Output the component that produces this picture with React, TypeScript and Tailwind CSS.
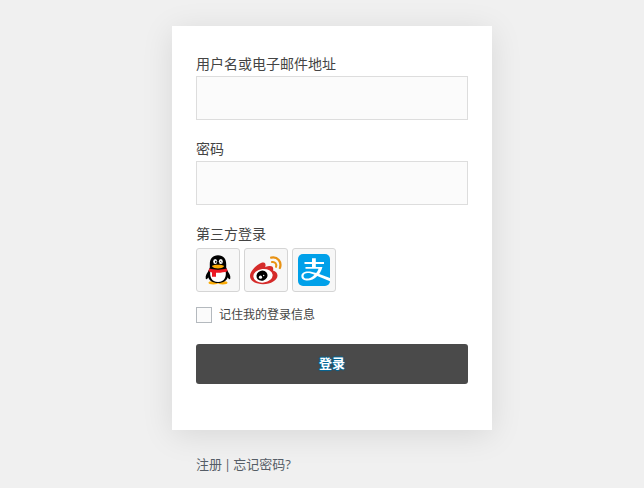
import type { ReactNode } from "react";

function QQIcon() {
  return (
    <svg viewBox="0 0 32 32" className="size-8" aria-hidden="true">
      <path d="M8 15.500C5 18.500 3.200 21.500 3.700 24.500C4.100 26 5.500 25 6.700 23ZM24 15.500C27 18.500 28.800 21.500 28.300 24.500C27.900 26 26.500 25 25.300 23Z" fill="#000" />
      <ellipse cx="11.300" cy="28.700" rx="4.800" ry="1.700" fill="#faab07" />
      <ellipse cx="20.700" cy="28.700" rx="4.800" ry="1.700" fill="#faab07" />
      <path d="M16 1.200C10.500 1.200 7.800 5 7.800 10V13.500C6 17 5.600 19 5.900 22C6.500 26.500 11 29 16 29S25.500 26.500 26.100 22C26.400 19 26 17 24.200 13.500V10C24.200 5 21.500 1.200 16 1.200Z" fill="#000" />
      <path d="M8.400 17H23.600C24.600 22.500 22.700 27.900 16 27.900S7.400 22.500 8.400 17Z" fill="#fff" />
      <ellipse cx="13.200" cy="7.500" rx="2" ry="2.600" fill="#fff" />
      <ellipse cx="18.800" cy="7.500" rx="2" ry="2.600" fill="#fff" />
      <ellipse cx="13.800" cy="7.800" rx=".8" ry="1.100" fill="#000" />
      <path d="M17.800 8.200Q18.600 6.500 19.500 8.100" fill="none" stroke="#000" strokeWidth=".8" />
      <path d="M9.800 11.900C12 10.400 20 10.400 22.200 11.900C21 13.700 18.500 14.400 16 14.400S11 13.700 9.800 11.900Z" fill="#faab07" />
      <path d="M7.200 14.500C12 16 20 16 24.800 14.500L25.500 17.300C22 18.500 17.500 19 14 18.700V22.700H10V18.400L6.500 17.300Z" fill="#eb1923" />
    </svg>
  );
}

function WeiboIcon() {
  return (
    <svg viewBox="0 0 32 32" className="size-8" aria-hidden="true">
      <path d="M13.500 8.500C10 7.700 0 16 0 22C0 27 6 30.200 13 30.200C21 30.200 27.500 26 27.500 21.500C27.500 18.700 25.400 17.300 23 16.500C24 13 22 10.600 15.200 13.200C16 10.700 15.500 8.800 13.500 8.500Z" fill="#d52b2a" />
      <ellipse cx="13" cy="21.800" rx="9.700" ry="6.800" fill="#fff" transform="rotate(-6 13 21.800)" />
      <ellipse cx="12" cy="21.700" rx="5.600" ry="5" fill="#000" transform="rotate(-18 12 21.700)" />
      <circle cx="10.500" cy="23.200" r="1.600" fill="#fff" />
      <circle cx="13.700" cy="21.500" r=".7" fill="#fff" />
      <path d="M21.200 3.700C27.500 2.300 32 7.800 29.900 14" fill="none" stroke="#e89214" strokeWidth="2.300" strokeLinecap="round" />
      <path d="M21.900 8.100C25 7.500 27 9.900 26 12.900" fill="none" stroke="#e89214" strokeWidth="2" strokeLinecap="round" />
    </svg>
  );
}

function AlipayIcon() {
  return (
    <svg viewBox="0 0 32 32" className="size-8" aria-hidden="true">
      <rect width="32" height="32" rx="5" fill="#00a0e9" />
      <path d="M14 4.300H17.800V8H26V10H17.800V13H24.400C23.700 15.700 22.600 18 21.200 20L32 24V27.300L19.300 21.900C13.900 28.200 3.700 27.700 3.400 22.400C3.100 16.900 10.700 16.200 18.200 19C19.300 17.700 20.100 16.300 20.500 14.800H7.500V13H14V10H6.500V8H14ZM16.500 20.700C10.700 17.900 5.600 18.500 5.500 22C5.400 25.600 12.100 25.700 16.500 20.700Z" fill="#fff" />
    </svg>
  );
}

function SocialButton({ label, children }: { label: string; children: ReactNode }) {
  return (
    <button type="button" aria-label={label} className="flex size-11 items-center justify-center rounded-[3px] border border-[#d5d5d5] bg-[#f7f7f7]">
      {children}
    </button>
  );
}

function Field({ id, label, type }: { id: string; label: string; type: string }) {
  return (
    <div className="flex flex-col gap-0.5">
      <label htmlFor={id} className="text-sm">{label}</label>
      <input id={id} type={type} className="h-11 w-full border border-[#ddd] bg-[#fbfbfb] px-3 outline-none" />
    </div>
  );
}

export default function App() {
  return (
    <div className="min-h-screen bg-[#f0f0f0] pt-[26px] pl-5 font-['Open_Sans','Noto_Sans_CJK_SC',sans-serif] text-[#444]">
      <main className="mx-auto w-full max-w-80">
        <form onSubmit={(event) => event.preventDefault()} className="flex flex-col gap-[19px] bg-white px-6 pt-7 pb-[46px] shadow-[0_5px_30px_rgba(0,0,0,0.1)]">
          <Field id="username" label="用户名或电子邮件地址" type="text" />
          <Field id="password" label="密码" type="password" />
          <div className="flex flex-col gap-[13px]">
            <div role="group" aria-labelledby="social-title" className="flex flex-col gap-1">
              <p id="social-title" className="text-sm">第三方登录</p>
              <div className="flex gap-1">
                <SocialButton label="QQ"><QQIcon /></SocialButton>
                <SocialButton label="微博"><WeiboIcon /></SocialButton>
                <SocialButton label="支付宝"><AlipayIcon /></SocialButton>
              </div>
            </div>
            <div className="flex items-center gap-[7px]">
              <input id="remember" type="checkbox" className="size-4 appearance-none border border-[#b4b9be] bg-[#fbfbfb] checked:bg-[#4a4a4a]" />
              <label htmlFor="remember" className="text-xs leading-5">记住我的登录信息</label>
            </div>
          </div>
          <button type="submit" className="h-10 rounded-[3px] bg-[#4a4a4a] text-[13px] font-bold text-white [text-shadow:0_-1px_1px_#006799,1px_0_1px_#006799,0_1px_1px_#006799,-1px_0_1px_#006799]">登录</button>
        </form>
        <nav className="flex gap-0.5 px-6 pt-6 text-[13px] leading-5 text-[#555d66]">
          <a href="#register">注册</a>
          <span>|</span>
          <a href="#forgot">忘记密码?</a>
        </nav>
      </main>
    </div>
  );
}
